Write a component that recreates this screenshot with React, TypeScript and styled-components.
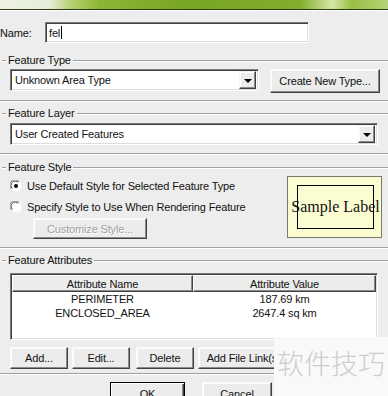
import React from "react";
import styled, { createGlobalStyle } from "styled-components";

const GlobalStyle = createGlobalStyle`
  html, body {
    margin: 0;
    padding: 0;
    background: #ededed;
  }
  body {
    font-family: "Liberation Sans", Arial, sans-serif;
    font-size: 11px;
    letter-spacing: -0.15px;
    color: #111;
    overflow: hidden;
  }
`;

const Dialog = styled.div`
  position: relative;
  width: 388px;
  height: 396px;
  overflow: hidden;
  background: #ededed;
`;

const TitleBar = styled.div`
  height: 9px;
  border-bottom: 1px solid #2c3b16;
  box-shadow: 0 1px 0 #fff;
  background: linear-gradient(
    90deg,
    #eef2e6 0,
    #e6edd6 50px,
    #b4d06c 72px,
    #8cb534 100px,
    #78a522 190px,
    #82ae2c 300px,
    #d6e7a6 332px,
    #98c044 352px,
    #b6d478 388px
  );
`;

const NameRow = styled.div`
  display: flex;
  align-items: center;
  margin-top: 12px;
  height: 21px;
`;

const NameLabel = styled.span`
  width: 45px;
`;

const TextField = styled.div`
  box-sizing: border-box;
  width: 264px;
  height: 21px;
  padding-left: 3px;
  display: flex;
  align-items: center;
  background: #fff;
  border-style: solid;
  border-width: 1px;
  border-color: #7a7a7a #fff #fff #7a7a7a;
  box-shadow: inset 1px 1px 0 #404040, inset -1px -1px 0 #dcdcdc;
`;

const Caret = styled.span`
  display: inline-block;
  width: 1px;
  height: 13px;
  background: #000;
  margin-left: 1px;
`;

const Group = styled.section<{ $top: number; $bottom: number; $right?: number }>`
  margin-top: ${(p) => p.$top}px;
  padding: 0 ${(p) => p.$right ?? 10}px ${(p) => p.$bottom}px 10px;
  border-bottom: 1px solid #a0a0a0;
  box-shadow: 0 1px 0 #fff;
`;

const GroupTitle = styled.div`
  display: flex;
  align-items: center;
  height: 14px;
  margin-left: -10px;
  margin-right: -10px;

  &::before {
    content: "";
    width: 4px;
    height: 1px;
    margin-left: 2px;
    background: #a0a0a0;
    box-shadow: 0 1px 0 #fff;
  }

  &::after {
    content: "";
    flex: 1;
    height: 1px;
    background: #a0a0a0;
    box-shadow: 0 1px 0 #fff;
  }

  span {
    padding: 0 2px;
  }
`;

const Row = styled.div<{ $top: number }>`
  display: flex;
  align-items: flex-start;
  margin-top: ${(p) => p.$top}px;
`;

const Combo = styled.div<{ $w: number }>`
  box-sizing: border-box;
  width: ${(p) => p.$w}px;
  height: 22px;
  display: flex;
  align-items: center;
  padding: 0 2px 0 4px;
  background: #fff;
  border-style: solid;
  border-width: 1px;
  border-color: #7a7a7a #fff #fff #7a7a7a;
  box-shadow: inset 1px 1px 0 #404040, inset -1px -1px 0 #dcdcdc;
`;

const ComboText = styled.span`
  flex: 1;
`;

const ComboArrow = styled.div`
  box-sizing: border-box;
  width: 17px;
  height: 18px;
  display: flex;
  align-items: center;
  justify-content: center;
  background: #ececec;
  border-style: solid;
  border-width: 1px;
  border-color: #f4f4f4 #404040 #404040 #f4f4f4;
  box-shadow: inset -1px -1px 0 #8a8a8a, inset 1px 1px 0 #fff;

  &::after {
    content: "";
    border-left: 4px solid transparent;
    border-right: 4px solid transparent;
    border-top: 4px solid #000;
    margin-top: 1px;
  }
`;

const Button = styled.button<{ $w: number; $h?: number; $default?: boolean }>`
  box-sizing: border-box;
  width: ${(p) => p.$w}px;
  height: ${(p) => p.$h ?? 22}px;
  padding: 0;
  font: inherit;
  letter-spacing: inherit;
  color: #111;
  background: #ececec;
  border-style: solid;
  border-width: 1px;
  border-color: ${(p) => (p.$default ? "#000" : "#f8f8f8 #404040 #404040 #f8f8f8")};
  box-shadow: ${(p) =>
    p.$default
      ? "inset 1px 1px 0 #fff, inset -1px -1px 0 #404040, inset -2px -2px 0 #8a8a8a"
      : "inset -1px -1px 0 #8a8a8a, inset 1px 1px 0 #fff"};
  white-space: nowrap;
  overflow: hidden;
  text-align: center;

  &:disabled {
    color: #a0a0a0;
    text-shadow: 1px 1px 0 #fff;
  }
`;

const StyleBody = styled.div`
  display: flex;
  align-items: flex-start;
`;

const RadioColumn = styled.div`
  padding-top: 1px;
  flex: 1;
`;

const RadioRow = styled.div`
  display: flex;
  align-items: center;
  height: 21px;
  gap: 5px;
`;

const SamplePanel = styled.div`
  box-sizing: border-box;
  width: 95px;
  height: 62px;
  margin-top: 2px;
  display: flex;
  align-items: center;
  justify-content: center;
  background: #fcfcd2;
  border: 1px solid #7a7a6a;
`;

const SampleFrame = styled.div`
  box-sizing: border-box;
  width: 77px;
  height: 44px;
  margin-left: 2px;
  border: 1px solid #000;
  display: flex;
  align-items: center;
  justify-content: center;
  font-family: "Liberation Serif", "Times New Roman", serif;
  font-size: 16px;
  letter-spacing: 0;
  white-space: nowrap;
`;

const ListView = styled.div`
  box-sizing: border-box;
  height: 67px;
  margin-top: 6px;
  background: #fff;
  border-style: solid;
  border-width: 1px;
  border-color: #7a7a7a #fff #fff #7a7a7a;
  box-shadow: inset 1px 1px 0 #404040, inset -1px -1px 0 #dcdcdc;
  padding: 1px;
`;

const ListGrid = styled.div`
  display: grid;
  grid-template-columns: 181px 1fr;
  grid-template-rows: 17px;
  grid-auto-rows: 14px;
`;

const HeaderCell = styled.div`
  box-sizing: border-box;
  height: 17px;
  display: flex;
  align-items: center;
  justify-content: center;
  background: #ececec;
  border-style: solid;
  border-width: 1px;
  border-color: #fff #404040 #404040 #fff;
  box-shadow: inset -1px -1px 0 #8a8a8a;
`;

const Cell = styled.div`
  text-align: center;
  line-height: 14px;
`;

const ButtonRow = styled.div`
  display: flex;
  gap: 4px;
  margin-top: 7px;
`;

const Footer = styled.div`
  display: flex;
  gap: 17px;
  margin-top: 8px;
  padding-left: 110px;
`;

const Watermark = styled.div`
  position: absolute;
  right: 0;
  top: 337px;
  width: 114px;
  height: 59px;
  background: #f9f9f9;
  display: flex;
  justify-content: center;
  padding-top: 11px;
  box-sizing: border-box;
  font-family: "Noto Sans CJK SC", sans-serif;
  font-size: 27px;
  font-weight: 300;
  line-height: 30px;
  color: #cdcdcd;
  letter-spacing: 0;
`;

const Radio = ({ checked }: { checked?: boolean }) => (
  <svg width="12" height="12" viewBox="0 0 12 12">
    <circle cx="6" cy="6" r="5.5" fill="#fff" />
    <path d="M1.2 9 A5.3 5.3 0 0 1 9 1.2" fill="none" stroke="#8a8a8a" strokeWidth="1" />
    <path d="M2.3 8.4 A4.2 4.2 0 0 1 8.4 2.3" fill="none" stroke="#404040" strokeWidth="1" />
    <path d="M3 10.8 A5.3 5.3 0 0 0 10.8 3" fill="none" stroke="#f4f4f4" strokeWidth="1" />
    {checked && <circle cx="6" cy="6" r="2" fill="#000" />}
  </svg>
);

const rows = [
  { name: "PERIMETER", value: "187.69 km" },
  { name: "ENCLOSED_AREA", value: "2647.4 sq km" },
];

export default function App() {
  return (
    <Dialog>
      <GlobalStyle />
      <TitleBar />

      <NameRow>
        <NameLabel>Name:</NameLabel>
        <TextField>
          fel
          <Caret />
        </TextField>
      </NameRow>

      <Group $top={10} $bottom={7} $right={8}>
        <GroupTitle>
          <span>Feature Type</span>
        </GroupTitle>
        <Row $top={2}>
          <Combo $w={249}>
            <ComboText>Unknown Area Type</ComboText>
            <ComboArrow />
          </Combo>
          <Button $w={110} $h={24} style={{ marginLeft: 11 }}>
            Create New Type...
          </Button>
        </Row>
      </Group>

      <Group $top={5} $bottom={8}>
        <GroupTitle>
          <span>Feature Layer</span>
        </GroupTitle>
        <Row $top={3}>
          <Combo $w={368}>
            <ComboText>User Created Features</ComboText>
            <ComboArrow />
          </Combo>
        </Row>
      </Group>

      <Group $top={6} $bottom={8} $right={6}>
        <GroupTitle>
          <span>Feature Style</span>
        </GroupTitle>
        <StyleBody>
          <RadioColumn>
            <RadioRow>
              <Radio checked />
              <span>Use Default Style for Selected Feature Type</span>
            </RadioRow>
            <RadioRow>
              <Radio />
              <span>Specify Style to Use When Rendering Feature</span>
            </RadioRow>
            <Row $top={1} style={{ paddingLeft: 23 }}>
              <Button $w={114} $h={21} disabled>
                Customize Style...
              </Button>
            </Row>
          </RadioColumn>
          <SamplePanel>
            <SampleFrame>Sample Label</SampleFrame>
          </SamplePanel>
        </StyleBody>
      </Group>

      <Group $top={5} $bottom={4}>
        <GroupTitle>
          <span>Feature Attributes</span>
        </GroupTitle>
        <ListView>
          <ListGrid>
            <HeaderCell>Attribute Name</HeaderCell>
            <HeaderCell>Attribute Value</HeaderCell>
            {rows.map((r) => (
              <React.Fragment key={r.name}>
                <Cell>{r.name}</Cell>
                <Cell>{r.value}</Cell>
              </React.Fragment>
            ))}
          </ListGrid>
        </ListView>
        <ButtonRow>
          <Button $w={58}>Add...</Button>
          <Button $w={58}>Edit...</Button>
          <Button $w={58} style={{ marginLeft: 2 }}>
            Delete
          </Button>
          <Button $w={100}>Add File Link(s)...</Button>
        </ButtonRow>
      </Group>

      <Footer>
        <Button $w={75} $h={23} $default>
          OK
        </Button>
        <Button $w={70} $h={23}>
          Cancel
        </Button>
      </Footer>

      <Watermark>软件技巧</Watermark>
    </Dialog>
  );
}
